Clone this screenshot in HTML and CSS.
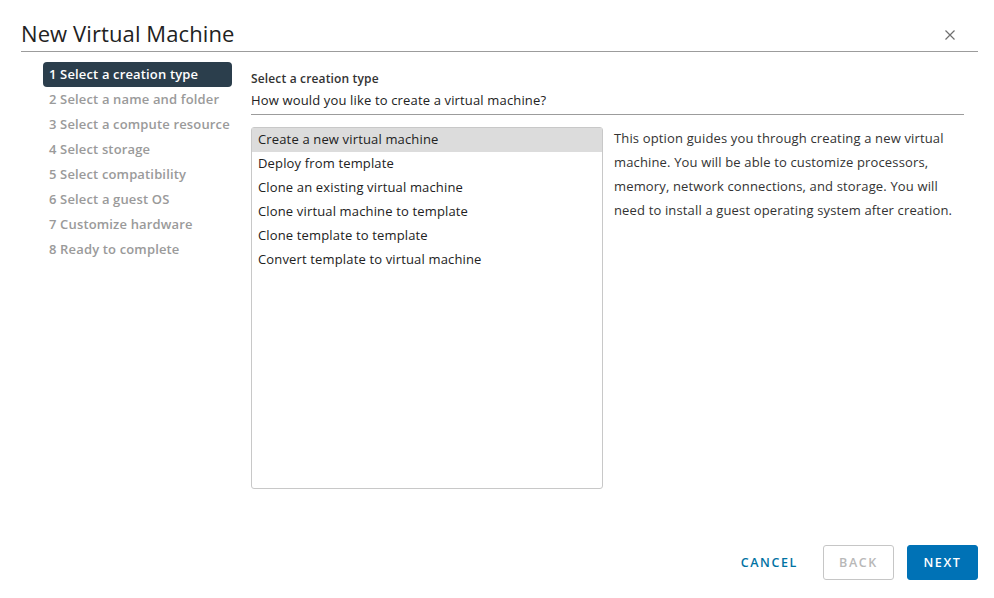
FILE: index.html
```html
<!DOCTYPE html>
<html>
<head>
<meta charset="utf-8">
<link rel="stylesheet" href="styles.css">
</head>
<body>
<div class="dialog">
  <div class="header">
    <h1 class="title">New Virtual Machine</h1>
    <button class="close" aria-label="Close">
      <svg width="12" height="12" viewBox="0 0 12 12"><path d="M1.5 1.5L10.5 10.5M10.5 1.5L1.5 10.5" stroke="#6f6f6f" stroke-width="1.2" fill="none"/></svg>
    </button>
  </div>
  <div class="body">
    <ul class="steps">
      <li class="step active">1 Select a creation type</li>
      <li class="step">2 Select a name and folder</li>
      <li class="step">3 Select a compute resource</li>
      <li class="step">4 Select storage</li>
      <li class="step">5 Select compatibility</li>
      <li class="step">6 Select a guest OS</li>
      <li class="step">7 Customize hardware</li>
      <li class="step">8 Ready to complete</li>
    </ul>
    <div class="main">
      <div class="page-head">
        <div class="page-title">Select a creation type</div>
        <div class="page-sub">How would you like to create a virtual machine?</div>
      </div>
      <div class="content">
        <ul class="options">
          <li class="option selected">Create a new virtual machine</li>
          <li class="option">Deploy from template</li>
          <li class="option">Clone an existing virtual machine</li>
          <li class="option">Clone virtual machine to template</li>
          <li class="option">Clone template to template</li>
          <li class="option">Convert template to virtual machine</li>
        </ul>
        <p class="desc">This option guides you through creating a new virtual machine. You will be able to customize processors, memory, network connections, and storage. You will need to install a guest operating system after creation.</p>
      </div>
    </div>
  </div>
  <div class="footer">
    <button class="btn btn-link">CANCEL</button>
    <button class="btn btn-outline" disabled>BACK</button>
    <button class="btn btn-primary">NEXT</button>
  </div>
</div>
</body>
</html>
```
FILE: styles.css
```css
* { box-sizing: border-box; }
html, body { margin: 0; padding: 0; background: #fff; }
body {
  font-family: "Open Sans", "Liberation Sans", sans-serif;
  color: #333;
  width: 994px;
  height: 598px;
  overflow: hidden;
  letter-spacing: 0.15px;
}
.dialog {
  padding: 0 16px 0 21px;
  height: 598px;
  display: flex;
  flex-direction: column;
}
.header {
  height: 52px;
  border-bottom: 1px solid #9c9c9c;
  display: flex;
  justify-content: space-between;
  align-items: flex-start;
}
.title {
  margin: 18px 0 0 0;
  font-size: 22px;
  font-weight: 400;
  line-height: 30px;
  letter-spacing: 0.1px;
  color: #222;
}
.close {
  margin: 29px 22px 0 0;
  padding: 0;
  border: 0;
  background: none;
  width: 12px;
  height: 12px;
  display: flex;
}
.body {
  display: flex;
  padding: 10px 15px 0 22px;
  gap: 19px;
  flex: 1;
}
.steps {
  list-style: none;
  margin: 0;
  padding: 0;
  width: 189px;
  flex: none;
}
.step {
  height: 25px;
  line-height: 25px;
  padding-left: 6px;
  font-size: 13px;
  font-weight: 600;
  color: #9a9a9a;
  border-radius: 4px;
  white-space: nowrap;
}
.step.active {
  background: #2b3e4c;
  color: #fff;
}
.main {
  flex: 1;
  display: flex;
  flex-direction: column;
}
.page-head {
  padding-top: 7px;
  border-bottom: 1px solid #9c9c9c;
  height: 53px;
}
.page-title {
  font-size: 12px;
  font-weight: 600;
  line-height: 20px;
  color: #333;
}
.page-sub {
  font-size: 13px;
  line-height: 22px;
  color: #222;
}
.content {
  display: flex;
  margin-top: 12px;
  gap: 11px;
}
.options {
  list-style: none;
  margin: 0;
  padding: 0;
  width: 352px;
  height: 362px;
  border: 1px solid #c8c8c8;
  border-radius: 3px;
  flex: none;
}
.option {
  height: 24px;
  line-height: 22px;
  padding-left: 6px;
  font-size: 13px;
  color: #222;
}
.option.selected {
  background: #dcdcdc;
}
.desc {
  margin: -1px 0 0 0;
  width: 350px;
  font-size: 13px;
  line-height: 24px;
  color: #333;
}
.footer {
  display: flex;
  justify-content: flex-end;
  align-items: center;
  gap: 13px;
  padding-bottom: 18px;
}
.btn {
  height: 35px;
  padding: 0;
  width: 71px;
  font-family: inherit;
  font-size: 12.5px;
  font-weight: 600;
  letter-spacing: 1.6px;
  border-radius: 3px;
  background: none;
  border: 1px solid transparent;
}
.btn-link {
  color: #0072a3;
  width: auto;
  padding: 0 11px 0 12px;
}
.btn-outline {
  border-color: #c6c6c6;
  color: #b8b8b8;
}
.btn-primary {
  background: #0072b6;
  border-color: #0072b6;
  color: #fff;
}
```
